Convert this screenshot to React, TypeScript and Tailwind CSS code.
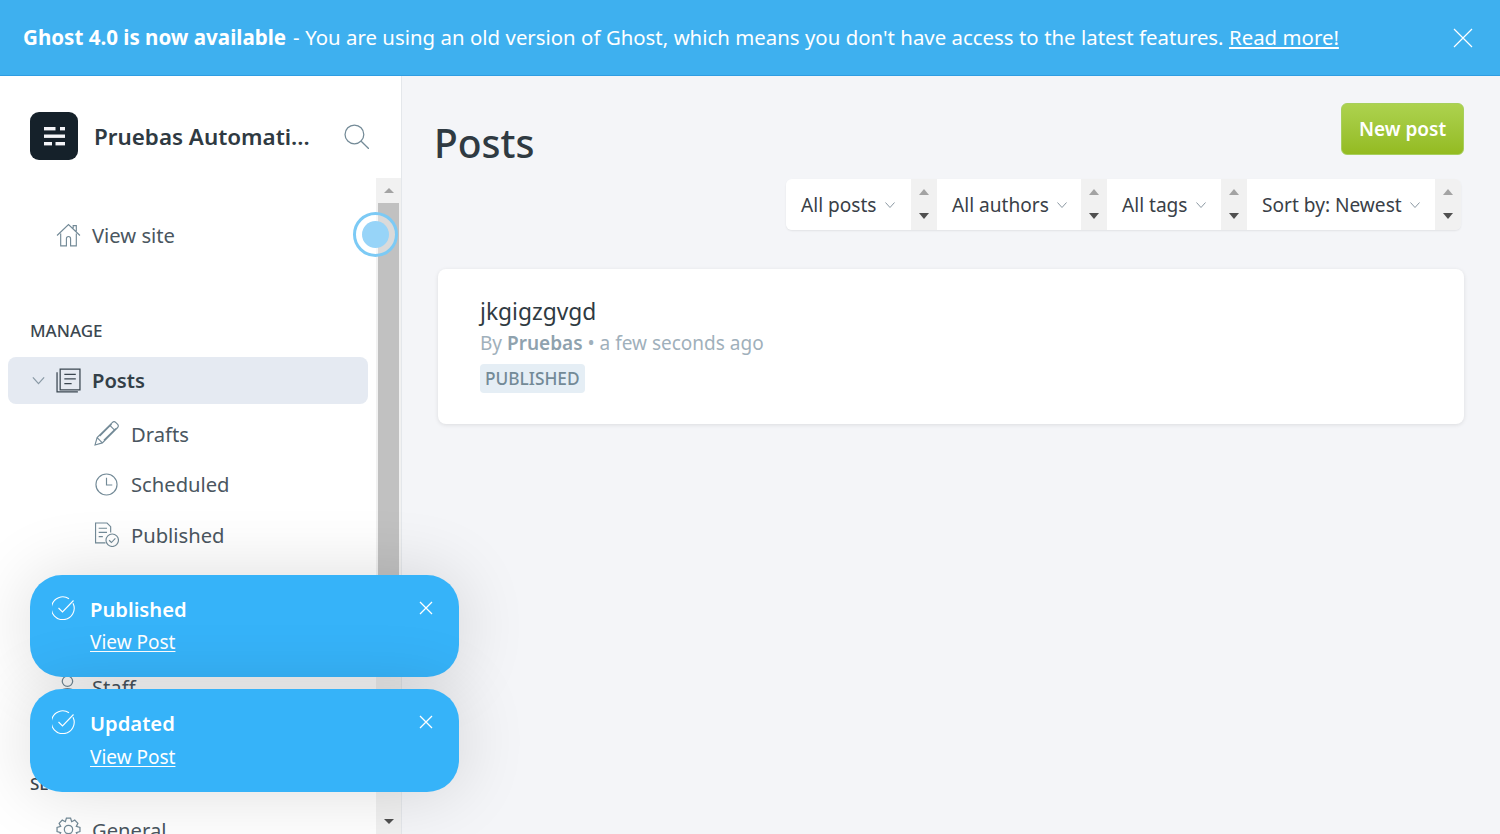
import React from "react";

const F = "font-['Noto_Sans','Open_Sans',sans-serif]";

function Chevron({ className = "" }: { className?: string }) {
  return (
    <svg viewBox="0 0 12 12" className={className} fill="none" stroke="currentColor" strokeWidth="1">
      <path d="M1.5 3.5 6 8.5l4.500-5" />
    </svg>
  );
}

function Spinner() {
  return (
    <div className="flex w-[26px] shrink-0 flex-col items-center justify-between self-stretch bg-[#f1f1f1] pb-[11px] pt-[10px]">
      <div className="h-0 w-0 border-x-[5px] border-b-[6px] border-x-transparent border-b-[#a3a3a3]" />
      <div className="h-0 w-0 border-x-[5px] border-t-[6px] border-x-transparent border-t-[#505050]" />
    </div>
  );
}

function Filter({ label, width }: { label: string; width: string }) {
  return (
    <div className="flex h-full items-stretch">
      <div className={`flex items-center bg-white pl-[15px] pt-[1px] text-[19.1px] text-[#394047] ${width}`}>
        <span className="whitespace-nowrap">{label}</span>
        <Chevron className="ml-[7px] h-[12px] w-[12px] text-[#8b98a2]" />
      </div>
      <Spinner />
    </div>
  );
}

function Item({ icon, label, sub = false }: { icon: React.ReactNode; label: string; sub?: boolean }) {
  return (
    <div className={`flex h-[50.5px] items-center text-[20.2px] text-[#4a5660] ${sub ? "gap-[12px] pl-[94px]" : "gap-[11px] pl-[56px]"}`}>
      <span className="flex h-[25px] w-[25px] items-center justify-center text-[#738a97]">{icon}</span>
      <span>{label}</span>
    </div>
  );
}

function Toast({ title, top, height, linkGap }: { title: string; top: string; height: string; linkGap: string }) {
  return (
    <div className={`absolute left-[30px] w-[429px] rounded-[32px] bg-[#36b3f9] text-white shadow-[0_0_70px_rgba(0,0,0,0.14)] ${top} ${height}`}>
      <div className="flex pl-[21px] pt-[21px]">
        <svg viewBox="0 0 24 24" className="ml-[1px] h-[24px] w-[24px]" fill="none" stroke="currentColor" strokeWidth="1.1">
          <path d="M21 7.2A11.4 11.4 0 1 1 17 2.7" />
          <path d="M6.500 12l4 4L21.500 4.500" />
        </svg>
        <div className="ml-[14px] mt-[-1px]">
          <div className="text-[20.2px] font-semibold leading-[28px]">{title}</div>
          <div className={`text-[19px] leading-[26px] underline underline-offset-2 ${linkGap}`}>View Post</div>
        </div>
      </div>
      <svg viewBox="0 0 14 14" className="absolute right-[26px] top-[26px] h-[14px] w-[14px]" fill="none" stroke="currentColor" strokeWidth="1.3">
        <path d="M1 1l12 12M13 1 1 13" />
      </svg>
    </div>
  );
}

export default function App() {
  return (
    <div className={`relative flex h-screen w-full flex-col overflow-hidden bg-[#f4f5f8] ${F}`}>
      {/* banner */}
      <div className="flex h-[76px] shrink-0 items-center border-b border-[#2f9de2] bg-[#3eb0ef] pl-[23px] pr-[27px] text-[20.35px] text-white">
        <span className="text-[20.55px] font-bold">Ghost 4.0 is now available</span>
        <span className="ml-[7px] whitespace-nowrap [word-spacing:0.2px]">- You are using an old version of Ghost, which means you don't have access to the latest features. <span className="underline">Read more!</span></span>
        <svg viewBox="0 0 20 20" className="ml-auto h-[20px] w-[20px]" fill="none" stroke="currentColor" strokeWidth="1.2">
          <path d="M1 1l18 18M19 1 1 19" />
        </svg>
      </div>

      <div className="flex min-h-0 flex-1">
        {/* sidebar */}
        <aside className="flex w-[402px] shrink-0 flex-col border-r border-[#e4e7eb] bg-white">
          <div className="flex h-[102px] shrink-0 items-center pl-[30px] pr-[31px] pt-[19px]">
            <div className="mt-[-1px] flex h-[48px] w-[48px] items-center justify-center rounded-[9px] bg-[#15212a]">
              <svg viewBox="0 0 21 19" className="h-[19px] w-[21px]" fill="#f4f5f8">
                <rect x="0" y="0" width="11.500" height="3.400" />
                <rect x="16" y="0" width="5" height="3.400" />
                <rect x="0" y="7.500" width="21" height="3.400" />
                <rect x="0" y="15" width="8" height="3.400" />
                <rect x="11.500" y="15" width="9.500" height="3.400" />
              </svg>
            </div>
            <span className="ml-[16px] whitespace-nowrap text-[22.400px] font-semibold text-[#2f3a42]">Pruebas Automati...</span>
            <svg viewBox="0 0 24 24" className="ml-auto mr-[1px] mt-[-1px] h-[25px] w-[25px] text-[#738a97]" fill="none" stroke="currentColor" strokeWidth="1.2">
              <circle cx="10" cy="10" r="9" />
              <path d="M16.500 16.500 24 24" />
            </svg>
          </div>

          <div className="flex min-h-0 flex-1">
            <nav className="relative min-w-0 flex-1 overflow-hidden pt-[32px]">
              <Item
                label="View site"
                icon={
                  <svg viewBox="0 0 24 24" className="h-[25px] w-[25px]" fill="none" stroke="currentColor" strokeWidth="1.1">
                    <path d="M1 12 12 1.500 23 12M4.500 10v12h5.500v-7a2 2 0 0 1 4 0v7h5.500V10M16.500 5V2.500h3V8" />
                  </svg>
                }
              />
              <div className="mt-[58px] pl-[30px] text-[17px] font-medium uppercase leading-[24px] text-[#3b4750]">Manage</div>
              <div className="ml-[8px] mt-[14px] flex h-[47px] w-[360px] items-center rounded-[8px] bg-[#e5eaf2] pl-[23px] text-[20.2px] font-semibold text-[#333f48]">
                <Chevron className="h-[15px] w-[15px] text-[#8a9aa6]" />
                <svg viewBox="0 0 24 24" className="ml-[10px] h-[25px] w-[25px] text-[#3a4650]" fill="none" stroke="currentColor" strokeWidth="1.2">
                  <path d="M4 1h19v20H4zM1 4v19h20M8 6h11M8 10.500h11M8 15h7" />
                </svg>
                <span className="ml-[11px]">Posts</span>
              </div>
              <div className="mt-[5px]">
                <Item
                  sub
                  label="Drafts"
                  icon={
                    <svg viewBox="0 0 24 24" className="h-[25px] w-[25px]" fill="none" stroke="currentColor" strokeWidth="1.1">
                      <path d="M1 23l2-7L17.500 1.500a2.500 2.500 0 0 1 3.500 0l1.500 1.500a2.500 2.500 0 0 1 0 3.500L8 21zM3 16l5 5M15 4l5 5M5.500 14.500 17 3M9.500 18.500 21 7" />
                    </svg>
                  }
                />
                <Item
                  sub
                  label="Scheduled"
                  icon={
                    <svg viewBox="0 0 24 24" className="h-[23px] w-[23px]" fill="none" stroke="currentColor" strokeWidth="1.2">
                      <circle cx="12" cy="12" r="11" />
                      <path d="M12 5v7.500h6" />
                    </svg>
                  }
                />
                <Item
                  sub
                  label="Published"
                  icon={
                    <svg viewBox="0 0 24 24" className="h-[25px] w-[25px]" fill="none" stroke="currentColor" strokeWidth="1.1">
                      <path d="M11 20H1.500V1h11l3.500 3.500V10M4.500 6h8M4.500 10h8M4.500 14h4" />
                      <circle cx="17.500" cy="17.500" r="6" />
                      <path d="m14.500 17.500 2.200 2.200 3.800-4" />
                    </svg>
                  }
                />
                <Item sub label="Pages" icon={<span />} />
                <Item sub label="Tags" icon={<span />} />
              </div>
              <div className="mt-[1px]">
                <Item
                  label="Staff"
                  icon={
                    <svg viewBox="0 0 24 24" className="h-[25px] w-[25px]" fill="none" stroke="currentColor" strokeWidth="1.2">
                      <circle cx="11" cy="6" r="5" />
                      <path d="M1 23c0-6 4-10 10-10s10 4 10 10" />
                    </svg>
                  }
                />
              </div>
              <div className="mt-[59px] pl-[30px] text-[17px] font-medium uppercase leading-[24px] text-[#3b4750]">Settings</div>
              <div className="mt-[9px]">
                <Item
                  label="General"
                  icon={
                    <svg viewBox="0 0 24 24" className="h-[25px] w-[25px]" fill="none" stroke="currentColor" strokeWidth="1.2">
                      <circle cx="12" cy="12" r="4" />
                      <path d="M10 1h4l1 3.500 3-1.500 3 3-1.500 3 3.500 1v4l-3.500 1 1.500 3-3 3-3-1.500-1 3.500h-4l-1-3.500-3 1.500-3-3 1.500-3L1 14v-4l3.500-1L3 6l3-3 3 1.500z" />
                    </svg>
                  }
                />
              </div>
            </nav>

            {/* scrollbar */}
            <div className="flex w-[25px] shrink-0 flex-col items-center bg-[#f1f1f1] pl-[2px] pr-[2px]">
              <div className="flex h-[25px] w-full shrink-0 items-center justify-center">
                <div className="h-0 w-0 border-x-[5px] border-b-[5px] border-x-transparent border-b-[#a3a3a3]" />
              </div>
              <div className="h-[440px] w-full shrink-0 bg-[#c1c1c1]" />
              <div className="min-h-0 flex-1" />
              <div className="flex h-[25px] w-full shrink-0 items-center justify-center">
                <div className="h-0 w-0 border-x-[5px] border-t-[5px] border-x-transparent border-t-[#505050]" />
              </div>
            </div>
          </div>
        </aside>

        {/* main */}
        <main className="min-w-0 flex-1 pl-[32px] pr-[36px]">
          <div className="flex items-start justify-between pt-[27px]">
            <h1 className="mt-[10px] text-[39px] font-medium leading-[60px] text-[#2f3a42]">Posts</h1>
            <button className="h-[52px] w-[123px] rounded-[6px] border border-[#a7cf5c] bg-gradient-to-b from-[#add24e] to-[#94bb20] text-[19px] font-semibold text-white">New post</button>
          </div>
          <div className="mt-[6px] flex justify-end pr-[3px]">
            <div className="flex h-[51px] overflow-hidden rounded-[6px] shadow-[0_1px_2px_rgba(0,0,0,0.08)]">
              <Filter label="All posts" width="w-[125px]" />
              <Filter label="All authors" width="w-[144px]" />
              <Filter label="All tags" width="w-[114px]" />
              <Filter label="Sort by: Newest" width="w-[188px]" />
            </div>
          </div>
          <div className="ml-[4px] mt-[39px] h-[155px] rounded-[8px] bg-white pl-[42px] pt-[26px] shadow-[0_1px_4px_rgba(0,0,0,0.1)]">
            <div className="text-[22.800px] leading-[33px] text-[#2f3a42]">jkgigzgvgd</div>
            <div className="text-[19px] leading-[30px] text-[#9fb0bb]">
              By <span className="font-semibold text-[#8fa2ae]">Pruebas</span> • a few seconds ago
            </div>
            <span className="mt-[6px] inline-block rounded-[4px] bg-[#e5eef5] px-[5px] text-[17.300px] font-medium leading-[29px] text-[#738a97]">PUBLISHED</span>
          </div>
        </main>
      </div>

      {/* pulse */}
      <div className="absolute left-[353px] top-[212px] flex h-[45px] w-[45px] items-center justify-center rounded-full border-[3px] border-[#7ccaf5] bg-white/40">
        <div className="h-[27px] w-[27px] rounded-full bg-[#97d4f8]" />
      </div>

      <Toast title="Published" top="top-[575px]" height="h-[102px]" linkGap="mt-[6px]" />
      <Toast title="Updated" top="top-[689px]" height="h-[103px]" linkGap="mt-[7px]" />
    </div>
  );
}
